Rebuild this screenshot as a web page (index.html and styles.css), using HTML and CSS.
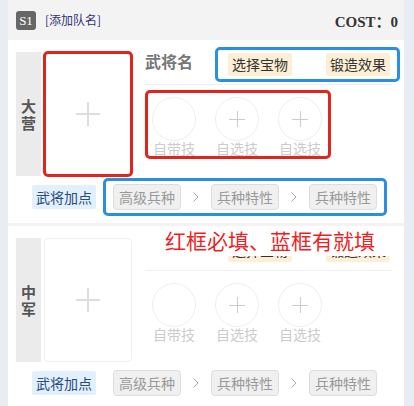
FILE: index.html
```html
<!DOCTYPE html>
<html lang="zh-CN">
<head>
    <meta charset="UTF-8">
    <meta name="viewport" content="width=device-width, initial-scale=1.0">
    <title>阵容配置</title>
    <link rel="stylesheet" href="styles.css">
</head>
<body>

<div class="team">
    <div class="team-head">
        <span class="badge">S1</span>
        <span class="team-name">[添加队名]</span>
        <span class="cost">COST：0</span>
    </div>

    <!-- 大营 -->
    <div class="slot">
        <div class="slot-main">
            <div class="slot-left">
                <div class="camp">大<br>营</div>
                <div class="avatar must"><span class="plus"></span></div>
            </div>
            <div class="slot-right">
                <div class="name-row">
                    <span class="hero-name">武将名</span>
                    <div class="extras maybe">
                        <span class="tag-gold">选择宝物</span>
                        <span class="tag-gold">锻造效果</span>
                    </div>
                </div>
                <div class="skills must">
                    <div class="skill"><span class="ring"></span><span class="skill-label">自带技</span></div>
                    <div class="skill"><span class="ring add"></span><span class="skill-label">自选技</span></div>
                    <div class="skill"><span class="ring add"></span><span class="skill-label">自选技</span></div>
                </div>
            </div>
        </div>
        <div class="slot-foot">
            <span class="tag-blue">武将加点</span>
            <div class="troops maybe">
                <span class="tag-grey">高级兵种</span>
                <svg class="chev" width="6" height="10" viewBox="0 0 6 10"><path d="M0.5 0.5 L5 5 L0.5 9.5" fill="none" stroke="#aaa" stroke-width="1"/></svg>
                <span class="tag-grey">兵种特性</span>
                <svg class="chev" width="6" height="10" viewBox="0 0 6 10"><path d="M0.5 0.5 L5 5 L0.5 9.5" fill="none" stroke="#aaa" stroke-width="1"/></svg>
                <span class="tag-grey">兵种特性</span>
            </div>
        </div>
    </div>

    <!-- 中军 -->
    <div class="slot">
        <div class="slot-main">
            <div class="slot-left">
                <div class="camp">中<br>军</div>
                <div class="avatar"><span class="plus"></span></div>
            </div>
            <div class="slot-right">
                <div class="name-row">
                    <span class="hero-name">武将名</span>
                    <div class="extras">
                        <span class="tag-gold">选择宝物</span>
                        <span class="tag-gold">锻造效果</span>
                    </div>
                </div>
                <div class="skills">
                    <div class="skill"><span class="ring"></span><span class="skill-label">自带技</span></div>
                    <div class="skill"><span class="ring add"></span><span class="skill-label">自选技</span></div>
                    <div class="skill"><span class="ring add"></span><span class="skill-label">自选技</span></div>
                </div>
            </div>
        </div>
        <div class="slot-foot">
            <span class="tag-blue">武将加点</span>
            <div class="troops">
                <span class="tag-grey">高级兵种</span>
                <svg class="chev" width="6" height="10" viewBox="0 0 6 10"><path d="M0.5 0.5 L5 5 L0.5 9.5" fill="none" stroke="#aaa" stroke-width="1"/></svg>
                <span class="tag-grey">兵种特性</span>
                <svg class="chev" width="6" height="10" viewBox="0 0 6 10"><path d="M0.5 0.5 L5 5 L0.5 9.5" fill="none" stroke="#aaa" stroke-width="1"/></svg>
                <span class="tag-grey">兵种特性</span>
            </div>
        </div>
        <div class="note">红框必填、蓝框有就填</div>
    </div>
</div>

</body>
</html>
```

FILE: styles.css
```css
body {
    margin: 0;
    background-color: #e9ecf1;
    font-family: "Noto Sans CJK SC", "Noto Sans", sans-serif;
    color: #333;
}
.team {
    margin-left: 8px;
    width: 396px;
    background-color: #f3f3f3;
}
.team-head {
    height: 40px;
    display: flex;
    align-items: center;
    padding: 0 6px 0 8px;
}
.badge {
    width: 20px;
    height: 19px;
    background-color: #666;
    color: #fff;
    border-radius: 3px;
    font-family: "Liberation Serif", serif;
    font-size: 13px;
    line-height: 19px;
    text-align: center;
}
.team-name {
    margin-left: 9px;
    font-size: 12px;
    line-height: 16px;
    color: #2d3577;
}
.cost {
    margin-left: auto;
    font-family: "Liberation Serif", "Noto Sans CJK SC", serif;
    font-weight: bold;
    font-size: 15px;
    color: #333;
}
.slot {
    position: relative;
    background-color: #fff;
    padding: 7px 4px 7px 8px;
    margin-bottom: 3px;
}
.slot-main {
    display: flex;
    align-items: flex-start;
}
.slot-left {
    display: flex;
    margin-top: 5px;
    height: 124px;
}
.camp {
    width: 25px;
    background-color: #ebebeb;
    display: flex;
    align-items: center;
    justify-content: center;
    text-align: center;
    font-size: 15px;
    line-height: 17px;
    font-weight: bold;
    color: #555;
}
.avatar {
    margin-left: 3px;
    width: 88px;
    box-sizing: border-box;
    border: 1px solid #eee;
    border-radius: 4px;
    display: flex;
    align-items: center;
    justify-content: center;
}
.avatar.must {
    outline: 3px solid #e2241c;
    outline-offset: -2px;
}
.plus {
    position: relative;
    width: 24px;
    height: 24px;
}
.plus::before, .plus::after {
    content: "";
    position: absolute;
    background-color: #ddd;
}
.plus::before {
    left: 0;
    top: 11px;
    width: 24px;
    height: 2px;
}
.plus::after {
    left: 11px;
    top: 0;
    width: 2px;
    height: 24px;
}
.slot-right {
    flex: 1;
    margin-left: 13px;
}
.name-row {
    display: flex;
    align-items: center;
    border-bottom: 1px solid #f0f0f0;
    margin-right: 8px;
    padding-bottom: 2px;
}
.hero-name {
    width: 70px;
    font-size: 16px;
    font-weight: 600;
    color: #777;
    line-height: 20px;
    margin-top: -7px;
}
.extras {
    flex: 1;
    margin-right: -8px;
    display: flex;
    justify-content: space-between;
    border: 3px solid transparent;
    border-radius: 5px;
    padding: 3px 7px 3px 10px;
}
.tag-gold {
    background-color: #fcefd5;
    border-radius: 3px;
    padding: 0 4px;
    font-size: 14px;
    line-height: 23px;
    color: #333;
}
.skills {
    margin-top: 5px;
    width: 186px;
    box-sizing: border-box;
    display: flex;
    gap: 19px;
    border: 3px solid transparent;
    border-radius: 5px;
    padding: 4px 5px 0 4px;
}
.skill {
    width: 44px;
    display: flex;
    flex-direction: column;
    align-items: center;
}
.ring {
    position: relative;
    width: 44px;
    height: 44px;
    box-sizing: border-box;
    border: 1px solid #eee;
    border-radius: 50%;
}
.ring.add::before, .ring.add::after {
    content: "";
    position: absolute;
    background-color: #ccc;
}
.ring.add::before {
    left: 13px;
    top: 21px;
    width: 16px;
    height: 1px;
}
.ring.add::after {
    left: 21px;
    top: 13px;
    width: 1px;
    height: 16px;
}
.skill-label {
    font-size: 14px;
    line-height: 15px;
    color: #ccc;
    white-space: nowrap;
}
.slot-foot {
    display: flex;
    align-items: center;
    margin-top: 2px;
    padding-left: 16px;
}
.tag-blue {
    background-color: #e1f0fc;
    color: #2a4a7c;
    font-size: 14px;
    line-height: 24px;
    padding: 0 4px;
    border-radius: 2px;
}
.troops {
    margin-left: 7px;
    display: flex;
    align-items: center;
    border: 3px solid transparent;
    border-radius: 5px;
    padding: 3px 7px;
}
.tag-grey {
    background-color: #f0f0f0;
    border: 1px solid #ddd;
    border-radius: 4px;
    padding: 0 5px;
    font-size: 14px;
    line-height: 24px;
    color: #999;
}
.chev {
    margin: 0 12px;
}

/* 标注框 */
.skills.must {
    border-color: #e2241c;
}
.extras.maybe, .troops.maybe {
    border-color: #2a8fe3;
}
.note {
    position: absolute;
    top: 0;
    left: 134px;
    right: 6px;
    height: 30px;
    background-color: #fff;
    color: #ee1f1f;
    font-size: 21px;
    line-height: 28px;
    text-align: center;
}
```
